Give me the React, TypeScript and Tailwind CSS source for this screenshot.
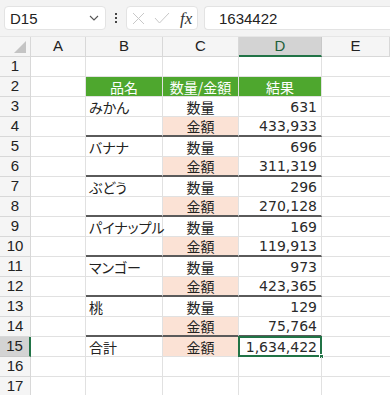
import React from "react";

const F = '"Noto Sans CJK JP", "Noto Sans", sans-serif';
const NUM = '"DejaVu Sans", sans-serif';

type Row = { b?: string; c?: string; d?: string; thick?: boolean; peach?: boolean; header?: boolean };

const rows: Row[] = [
  {},
  { b: "品名", c: "数量/金額", d: "結果", header: true },
  { b: "みかん", c: "数量", d: "631" },
  { c: "金額", d: "433,933", thick: true, peach: true },
  { b: "バナナ", c: "数量", d: "696" },
  { c: "金額", d: "311,319", thick: true, peach: true },
  { b: "ぶどう", c: "数量", d: "296" },
  { c: "金額", d: "270,128", thick: true, peach: true },
  { b: "パイナップル", c: "数量", d: "169" },
  { c: "金額", d: "119,913", thick: true, peach: true },
  { b: "マンゴー", c: "数量", d: "973" },
  { c: "金額", d: "423,365", thick: true, peach: true },
  { b: "桃", c: "数量", d: "129" },
  { c: "金額", d: "75,764", thick: true, peach: true },
  { b: "合計", c: "金額", d: "1,634,422", peach: true },
  {},
  {},
];

export default function App() {
  return (
    <div className="w-[390px] h-[395px] overflow-hidden bg-white text-[#222]" style={{ fontFamily: F }}>
      {/* Formula bar */}
      <div className="h-[37px] bg-[#f3f3f3] flex items-center pl-[4px] border-b border-[#e6e6e6]">
        <div className="w-[102px] h-[24px] bg-white rounded-[4px] border border-[#e3e3e3] flex items-center justify-between pl-[5px] pr-[6px]">
          <span className="text-[15px] leading-none" style={{ fontFamily: '"Liberation Sans", sans-serif' }}>D15</span>
          <svg width="10" height="6" viewBox="0 0 10 6"><path d="M1 1 L5 5 L9 1" fill="none" stroke="#555" strokeWidth="1.1" /></svg>
        </div>
        <div className="w-[20px] flex flex-col items-center justify-center gap-[2px]">
          <div className="w-[2px] h-[2px] bg-[#444]" />
          <div className="w-[2px] h-[2px] bg-[#444]" />
          <div className="w-[2px] h-[2px] bg-[#444]" />
        </div>
        <div className="w-[72px] h-[24px] bg-white rounded-[4px] border border-[#e3e3e3] flex items-center pl-[5px]">
          <svg width="13" height="13" viewBox="0 0 13 13"><path d="M1 1 L12 12 M12 1 L1 12" stroke="#c8c8c8" strokeWidth="1" /></svg>
          <svg className="ml-[9px]" width="16" height="12" viewBox="0 0 16 12"><path d="M1 6 L5.5 11 L15 1" fill="none" stroke="#c8c8c8" strokeWidth="1" /></svg>
          <span className="ml-[10px] text-[17px] italic leading-none text-[#333]" style={{ fontFamily: '"Liberation Serif", serif' }}>fx</span>
        </div>
        <div className="ml-[6px] flex-1 h-[24px] bg-white rounded-l-[4px] border border-r-0 border-[#e3e3e3] flex items-center pl-[14px]">
          <span className="text-[15px] leading-none" style={{ fontFamily: '"Liberation Sans", sans-serif' }}>1634422</span>
        </div>
      </div>

      {/* Sheet grid */}
      <div className="grid grid-cols-[31px_55px_77px_76px_83px_68px] auto-rows-[20px]">
        <div className="bg-[#f5f5f5] border-r border-b border-[#d8d8d8] relative">
          <svg className="absolute right-[4px] bottom-[3px]" width="12" height="12" viewBox="0 0 12 12"><path d="M12 0 L12 12 L0 12 Z" fill="#c4c4c4" /></svg>
        </div>
        {["A", "B", "C", "D", "E"].map((l) => (
          <div
            key={l}
            className={
              l === "D"
                ? "bg-[#d3d3d3] border-r border-[#c8c8c8] border-b-2 border-b-[#217346] flex items-center justify-center text-[15px] text-[#1d5f3a]"
                : "bg-[#f5f5f5] border-r border-b border-[#d8d8d8] flex items-center justify-center text-[15px] text-[#222]"
            }
            style={{ fontFamily: '"Liberation Sans", sans-serif' }}
          >
            {l}
          </div>
        ))}
        {rows.map((r, i) => {
          const n = i + 1;
          const sel = n === 15;
          const thick = r.thick ? "border-b-2 border-b-[#5a5a5a]" : "border-b border-b-[#e1e1e1]";
          return (
            <React.Fragment key={n}>
              <div
                className={
                  sel
                    ? "bg-[#d3d3d3] border-r-2 border-r-[#217346] border-b border-b-[#c8c8c8] flex items-center justify-center text-[15px]"
                    : "bg-[#f5f5f5] border-r border-b border-[#d8d8d8] flex items-center justify-center text-[15px]"
                }
                style={{ fontFamily: '"Liberation Sans", sans-serif' }}
              >
                {n}
              </div>
              <div className="border-r border-b border-[#e1e1e1]" />
              <div
                className={`${r.header ? "bg-[#4ea72e] text-white justify-center border-b border-b-[#e1e1e1]" : "pl-[3px] " + thick} border-r border-r-[#e1e1e1] flex items-center text-[14px] leading-none whitespace-nowrap overflow-visible relative z-10 [font-feature-settings:'palt']`}
              >
                {r.b}
              </div>
              <div
                className={`${r.header ? "bg-[#4ea72e] text-white border-b border-b-[#e1e1e1]" : (r.peach ? "bg-[#fbe2d5] " : "") + thick} border-r border-r-[#e1e1e1] flex items-center justify-center text-[14px] leading-none whitespace-nowrap`}
              >
                {r.c}
              </div>
              <div
                className={`${r.header ? "bg-[#4ea72e] text-white justify-center border-b border-b-[#e1e1e1] text-[14px]" : "justify-end pr-[4px] text-[14px] text-[#2a2a2a] " + thick} border-r border-r-[#e1e1e1] flex items-center leading-none relative whitespace-nowrap`}
              >
                {sel && (
                  <>
                    <div className="absolute left-[-1px] top-[-1px] right-[-1px] bottom-[-1px] border-2 border-[#217346]" />
                    <div className="absolute right-[-3px] bottom-[-3px] w-[5px] h-[5px] bg-[#217346] border border-white" />
                  </>
                )}
                <span className="relative" style={r.header ? undefined : { fontFamily: NUM }}>{r.d}</span>
              </div>
              <div className="border-b border-[#e1e1e1]" />
            </React.Fragment>
          );
        })}
      </div>
    </div>
  );
}
